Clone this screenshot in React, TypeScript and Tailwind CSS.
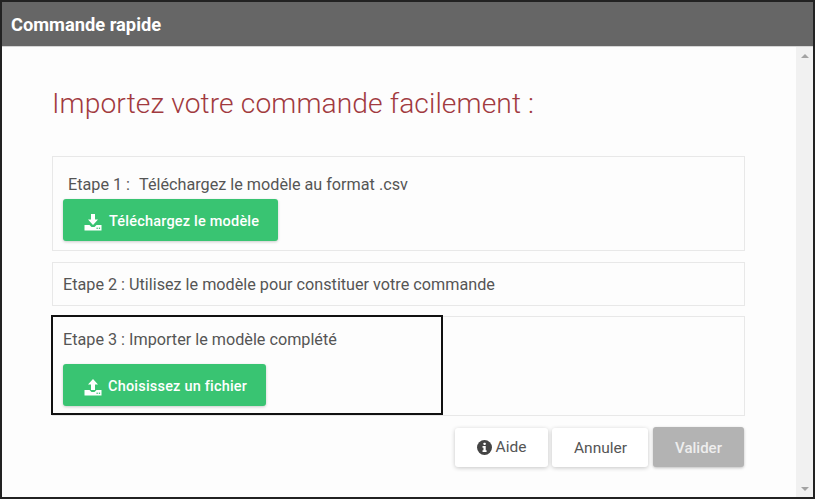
const roboto = "font-['Roboto',sans-serif]"

// download / upload glyph with tray, arrow direction differs
function TrayIcon({ up }: { up?: boolean }) {
  return (
    <svg viewBox="0 0 18 18" className="w-[18px] h-[18px] flex-shrink-0" fill="white">
      {up ? (
        <path d="M9 1 L14 6.5 H11 V12 H7 V6.5 H4 Z" />
      ) : (
        <path d="M7 1 H11 V6.5 H14 L9 12 L4 6.5 H7 Z" />
      )}
      <path d="M0.5 12 H5.5 L7.5 14 H10.5 L12.5 12 H17.5 V17.5 H0.5 Z" />
      <rect x="12.5" y="14.6" width="1.3" height="1.3" fill="#39c472" />
      <rect x="14.8" y="14.6" width="1.3" height="1.3" fill="#39c472" />
    </svg>
  )
}

function InfoIcon() {
  return (
    <svg viewBox="0 0 16 16" className="w-[15px] h-[15px] flex-shrink-0">
      <circle cx="8" cy="8" r="8" fill="#444" />
      <rect x="6.9" y="2.8" width="2.4" height="2.4" rx="0.6" fill="white" />
      <path d="M5.9 6.5 H9.3 V11 H10.2 V12.8 H5.9 V11 H6.9 V8.2 H5.9 Z" fill="white" />
    </svg>
  )
}

function GreenButton({ label, up, className }: { label: string; up?: boolean; className: string }) {
  return (
    <button className={`h-[42px] flex items-center bg-[#39c472] rounded-[3px] shadow-[0_1px_3px_rgba(0,0,0,0.2)] text-white text-[14.5px] font-medium tracking-[0.2px] pt-[3px] ${className}`}>
      <TrayIcon up={up} />
      <span>{label}</span>
    </button>
  )
}

export default function App() {
  return (
    <div className={`${roboto} w-[815px] h-[499px] bg-[#222] pt-[2px] pb-[2px] pl-[2px] pr-[2px] overflow-hidden`}>
      <div className="h-[495px] bg-white flex flex-col">
        {/* Header */}
        <div className="h-[45px] flex-shrink-0 bg-[#666666] border-b border-[#d5d5d5] flex items-center pl-[9px] pt-[1px]">
          <h1 className="text-[18.3px] font-bold text-white">Commande rapide</h1>
        </div>

        <div className="flex-1 flex min-h-0">
          {/* Body */}
          <div className="flex-1 bg-[#fdfdfd] pl-[50px] pr-[51px]">
            <h2 className="text-[28.2px] font-light text-[#a13a3f] mt-[40px] h-[34px] leading-[34px] tracking-[0.1px]">
              Importez votre commande facilement :
            </h2>

            <div className="mt-[35px] h-[95px] border border-[#e8e8e8] pl-[10px] pt-[18px]">
              <p className="pl-[5px] text-[16.2px] leading-[20px] text-[#555]">
                Etape 1 :&nbsp; <span className="ml-[1px]">Téléchargez le modèle au format .csv</span>
              </p>
              <GreenButton label="Téléchargez le modèle" className="mt-[4px] w-[215px] pl-[21px] gap-[7px]" />
            </div>

            <div className="mt-[11px] h-[44px] border border-[#e8e8e8] pl-[10px] flex items-center pt-[3px]">
              <p className="text-[16.2px] text-[#555]">Etape 2 : Utilisez le modèle pour constituer votre commande</p>
            </div>

            <div className="relative mt-[10px] h-[100px] border border-[#e8e8e8] pl-[10px] pt-[13px]">
              <p className="text-[16.2px] leading-[20px] text-[#555]">Etape 3 : Importer le modèle complété</p>
              <GreenButton up label="Choisissez un fichier" className="mt-[14px] w-[203px] pl-[21px] gap-[6px]" />
              {/* black annotation rectangle */}
              <div className="absolute left-[-2px] top-[-2px] w-[392px] h-[100px] border-2 border-[#111]" />
            </div>

            <div className="mt-[11px] flex justify-end gap-[4px] pr-[1px]">
              <button className="mt-[1px] w-[93px] h-[39px] flex items-center justify-center gap-[4px] bg-white rounded-[3px] shadow-[0_1px_4px_rgba(0,0,0,0.22)] text-[15.5px] text-[#555]">
                <InfoIcon />
                <span className="pt-[1px]">Aide</span>
              </button>
              <button className="mt-[1px] w-[96px] h-[39px] pt-[2px] pl-[1px] bg-white rounded-[3px] shadow-[0_1px_4px_rgba(0,0,0,0.22)] text-[15.5px] text-[#555]">
                Annuler
              </button>
              <button className="ml-[1px] w-[91px] h-[40px] pt-[2px] bg-[#b3b3b3] rounded-[3px] shadow-[0_1px_3px_rgba(0,0,0,0.25)] text-[15px] font-medium text-[#eeeeee]">
                Valider
              </button>
            </div>
          </div>

          {/* Scrollbar */}
          <div className="w-[17px] flex-shrink-0 bg-[#f1f1f1] flex flex-col justify-between">
            <div className="h-[17px] flex items-center justify-center">
              <div className="w-0 h-0 border-l-[4px] border-r-[4px] border-b-[4px] border-l-transparent border-r-transparent border-b-[#a3a3a3]" />
            </div>
            <div className="h-[17px] flex items-center justify-center">
              <div className="w-0 h-0 border-l-[4px] border-r-[4px] border-t-[4px] border-l-transparent border-r-transparent border-t-[#a3a3a3]" />
            </div>
          </div>
        </div>
      </div>
    </div>
  )
}
